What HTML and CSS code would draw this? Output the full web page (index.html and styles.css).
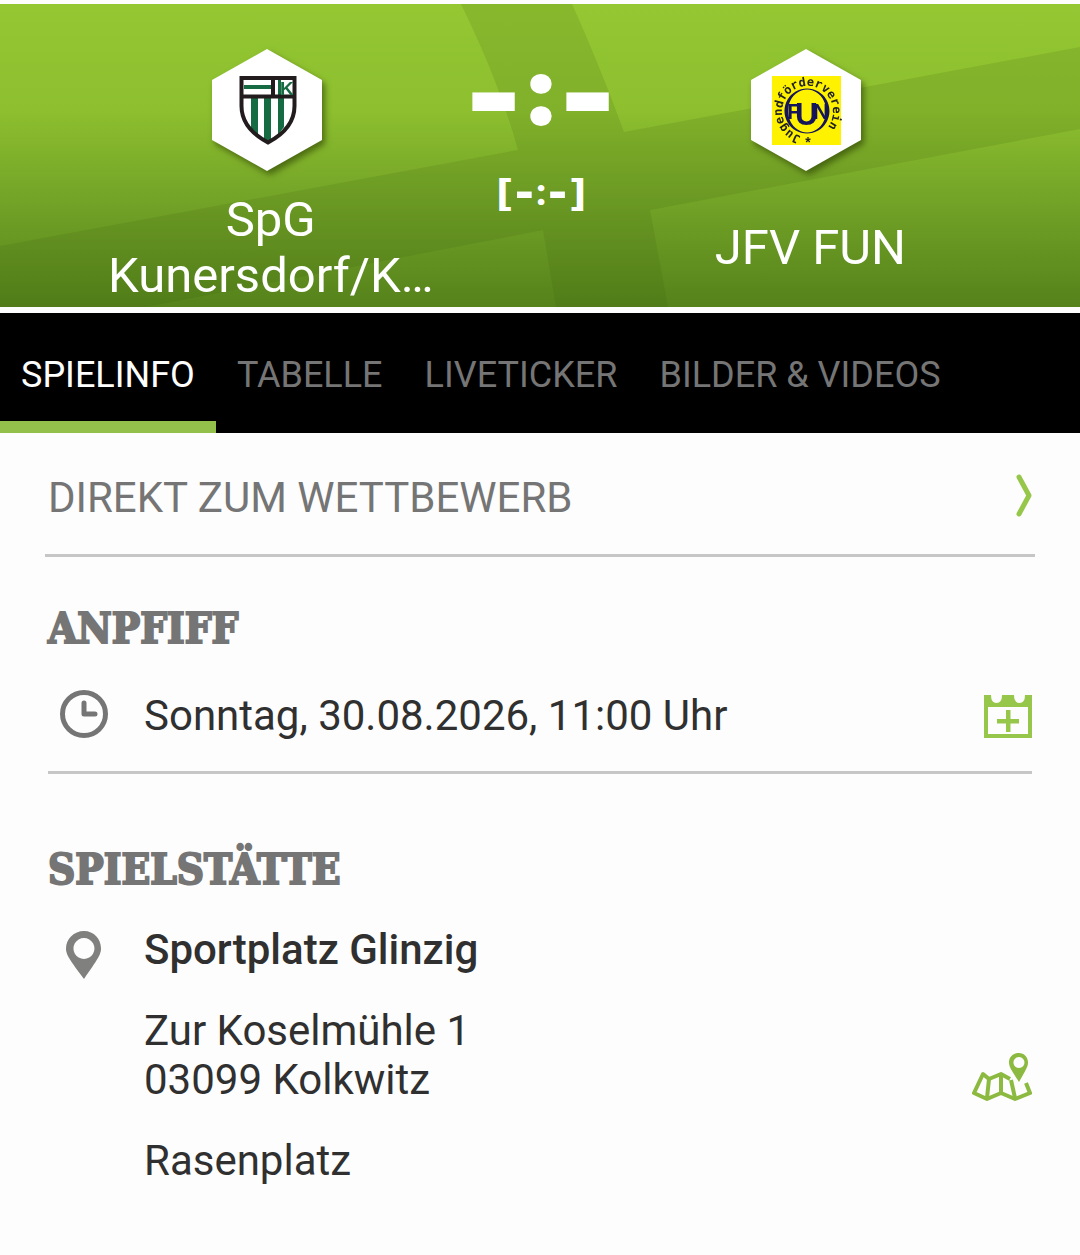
FILE: index.html
```html
<!DOCTYPE html>
<html lang="de">
<head>
  <meta charset="UTF-8" />
  <meta name="viewport" content="width=device-width, initial-scale=1.0"/>
  <title>Spielinfo</title>
  <link rel="stylesheet" href="styles.css">
</head>
<body>

<header class="match">
  <svg class="match-bg" viewBox="0 0 1080 303" preserveAspectRatio="none" aria-hidden="true">
    <path d="M461 0H572Q600 62 624 128L1080 43V125L650 206L668 303H556L543 226L146 303H0V242L518 146Q500 80 461 0Z"/>
  </svg>

  <div class="team">
    <svg class="crest" viewBox="0 0 110 122" aria-hidden="true">
      <path fill="#fff" d="M55 0L110 31V91L55 122L0 91V31Z"/>
      <path fill="#176b42" d="M32 36H60V40H32ZM39 49H46V86L39 79ZM52 49H59V92H52ZM66 49H72V78L66 86ZM66 31H69V46H66Z"/>
      <path fill="none" stroke="#231c1e" stroke-width="4" d="M29.500 29H82.500V57C82.500 73 72 85 56 93.500C40 85 29.500 73 29.500 57ZM29 47.500H83M61 29V48"/>
      <text class="crest-k" x="68" y="46">K</text>
    </svg>
    <h2 class="team-name">SpG<br>Kunersdorf/K…</h2>
  </div>

  <div class="score">
    <div class="result">
      <span class="dash">-</span><span class="colon">:</span><span class="dash">-</span>
    </div>
    <div class="halftime">
      <span class="bracket">[</span><span class="dash">-</span><span>:</span><span class="dash">-</span><span class="bracket">]</span>
    </div>
  </div>

  <div class="team">
    <svg class="crest" viewBox="0 0 110 122" aria-hidden="true">
      <path fill="#fff" d="M55 0L110 31V91L55 122L0 91V31Z"/>
      <path fill="#fff200" d="M21 27H90V96H21Z"/>
      <path id="ring" fill="none" d="M50 87A25.500 25.500 0 1 1 63 87"/>
      <text class="crest-ring"><textPath href="#ring">Jugendförderverein</textPath></text>
      <text class="crest-star" x="57" y="98">*</text>
      <path fill="#15155c" fill-rule="evenodd" d="M56 39.500A22.500 22.500 0 1 1 55.900 39.500ZM56 40.500A19 21.500 0 1 0 56.100 40.500Z"/>
      <g class="crest-fun">
        <text x="36" y="70">F</text>
        <text class="big" x="44" y="76">U</text>
        <text x="62" y="70">N</text>
      </g>
    </svg>
    <h2 class="team-name">JFV FUN</h2>
  </div>
</header>

<nav class="tabs">
  <a class="active" href="#spielinfo">SPIELINFO</a>
  <a href="#tabelle">TABELLE</a>
  <a href="#liveticker">LIVETICKER</a>
  <a href="#bilder">BILDER &amp; VIDEOS</a>
</nav>

<main id="spielinfo">
  <a class="competition" href="#wettbewerb">
    DIREKT ZUM WETTBEWERB
    <svg class="chevron" viewBox="0 0 16 42" aria-hidden="true"><path d="M3 1L13 19.500L3 38"/></svg>
  </a>

  <section class="kickoff">
    <h3>ANPFIFF</h3>
    <div class="row">
      <svg class="icon" viewBox="0 0 48 48" aria-hidden="true">
        <circle cx="24" cy="24" r="21.500" fill="none" stroke="#757575" stroke-width="5"/>
        <path fill="none" stroke="#757575" stroke-width="5" stroke-linecap="round" stroke-linejoin="round" d="M24 13V24H35"/>
      </svg>
      <p>Sonntag, 30.08.2026, 11:00 Uhr</p>
      <button type="button" aria-label="Termin speichern">
        <svg width="48" height="43" viewBox="0 0 48 43" aria-hidden="true">
          <path fill="#97c74a" fill-rule="evenodd" d="M0 0H7Q7 8 12.500 8Q18 8 18 0H30Q30 8 35.500 8Q41 8 41 0H48V43H0ZM4 12V39H44V12ZM22 15H26.500V24H35V28.500H26.500V37H22V28.500H13V24H22Z"/>
        </svg>
      </button>
    </div>
  </section>

  <section class="venue">
    <h3>SPIELSTÄTTE</h3>
    <div class="row">
      <svg class="icon" viewBox="0 0 48 48" aria-hidden="true">
        <path fill="#80807e" fill-rule="evenodd" d="M24 0C14 0 6 8 6 17.500C6 24 10 29 24 48C37 29 41 24 41 17.500C41 8 34 0 24 0ZM24 7A10.500 10.500 0 1 1 23.900 7Z"/>
      </svg>
      <address>
        <strong>Sportplatz Glinzig</strong>
        <p>Zur Koselmühle 1<br>03099 Kolkwitz</p>
        <p>Rasenplatz</p>
      </address>
      <button type="button" aria-label="Karte öffnen">
        <svg width="60" height="48" viewBox="0 0 60 48" aria-hidden="true">
          <g fill="none" stroke="#8cba40" stroke-width="4" stroke-linejoin="round">
            <path d="M38 26L29 21L17 26L11 21L2 40L15 46L29 40L43 46L58 40L54 30"/>
            <path d="M17 26L15 45M29 21V40M39 27L43 45"/>
          </g>
          <path fill="#8cba40" fill-rule="evenodd" d="M47 0C41 0 37 4 37 9.500C37 14 40 18 47 29C53 18 56 14 56 9.500C56 4 52 0 47 0ZM47 4A5.500 5.500 0 1 1 46.900 4Z"/>
        </svg>
      </button>
    </div>
  </section>
</main>

</body>
</html>
```
FILE: styles.css
```css
* {
    margin: 0;
    padding: 0;
    box-sizing: border-box;
}

body {
    background-color: #fdfdfd;
    font-family: Roboto, Arial, sans-serif;
    font-size: 42px;
    line-height: 49px;
    color: #303030;
}

a {
    text-decoration: none;
}

button {
    display: flex;
    border: none;
    background: none;
    cursor: pointer;
}

/* Match header */
.match {
    position: relative;
    display: grid;
    grid-template-columns: 3fr 2fr 3fr;
    margin: 4px 0 6px;
    padding: 45px 10% 0;
    background-image: linear-gradient(#94c732, #8dbf2f 35%, #73a327 65%, #55821b);
    color: #fff;
}

.match-bg {
    position: absolute;
    width: 100%;
    height: 100%;
    fill: rgba(60, 95, 15, 0.14);
}

.team, .score {
    position: relative;
    display: flex;
    flex-direction: column;
    align-items: center;
}

.crest {
    width: 110px;
    height: 122px;
    margin-right: 8px;
    overflow: visible;
    filter: drop-shadow(3px 4px 3px rgba(40, 60, 0, 0.6));
}

.crest text {
    font-family: "Liberation Sans", sans-serif;
    font-weight: bold;
}

.crest .crest-k {
    font-size: 19px;
    fill: #176b42;
}

.crest .crest-ring {
    font-family: "DejaVu Sans Mono", monospace;
    font-size: 12px;
    fill: #222;
}

.crest .crest-star {
    font-size: 14px;
    text-anchor: middle;
    fill: #222;
}

.crest-fun {
    font-size: 22px;
    fill: #15155c;
}

.crest-fun .big {
    font-size: 32px;
}

.team-name {
    display: flex;
    align-items: center;
    height: 112px;
    margin: 21px 0 3px;
    font-size: 49px;
    font-weight: normal;
    line-height: 56px;
    text-align: center;
    white-space: nowrap;
}

.result, .halftime {
    display: flex;
    font-weight: 900;
}

.result {
    gap: 2px;
    height: 100px;
    line-height: 92px;
}

.result .dash {
    font-size: 144px;
    line-height: 96px;
}

.result .colon {
    font-size: 84px;
    -webkit-text-stroke: 6px #fff;
}

.halftime {
    margin-top: 20px;
    font-size: 36px;
    line-height: 48px;
}

.halftime .dash {
    font-size: 50px;
}

.halftime .bracket {
    font-family: "DejaVu Sans", sans-serif;
    font-size: 38px;
}

/* Tabs */
.tabs {
    display: flex;
    height: 120px;
    background-color: #000;
    font-size: 36px;
    line-height: 124px;
}

.tabs a {
    padding: 0 21px;
    color: #757575;
}

.tabs .active {
    border-bottom: 12px solid #93c04b;
    color: #fff;
}

/* Content */
main {
    padding: 0 48px 60px;
}

.competition {
    display: flex;
    justify-content: space-between;
    align-items: center;
    height: 124px;
    margin: 0 -3px;
    padding: 7px 3px 0;
    border-bottom: 3px solid #c6c6c6;
    color: #757575;
}

.chevron {
    width: 16px;
    height: 42px;
    overflow: visible;
    fill: none;
    stroke: #97c74a;
    stroke-width: 5;
    stroke-linecap: round;
    stroke-linejoin: round;
}

h3 {
    font-family: "DejaVu Serif Condensed", "DejaVu Serif", serif;
    font-size: 42px;
    font-weight: bold;
    color: #757575;
    -webkit-text-stroke: 2px #757575;
}

.row {
    display: flex;
    gap: 36px;
}

.icon {
    width: 48px;
    height: 48px;
    margin-left: 12px;
}

.row button {
    margin-left: auto;
}

.kickoff {
    padding: 47px 0 30px;
    border-bottom: 3px solid #c6c6c6;
}

.kickoff .row {
    align-items: center;
    margin-top: 37px;
}

.kickoff .icon {
    margin-bottom: 3px;
}

.kickoff button {
    padding-top: 2px;
}

.venue {
    padding-top: 71px;
}

.venue .row {
    margin-top: 31px;
}

.venue .icon {
    margin-top: 6px;
}

.venue button {
    align-self: flex-end;
    margin-bottom: 84px;
}

address {
    font-style: normal;
}

address strong {
    font-weight: 500;
}

address p {
    margin-top: 32px;
}
```
